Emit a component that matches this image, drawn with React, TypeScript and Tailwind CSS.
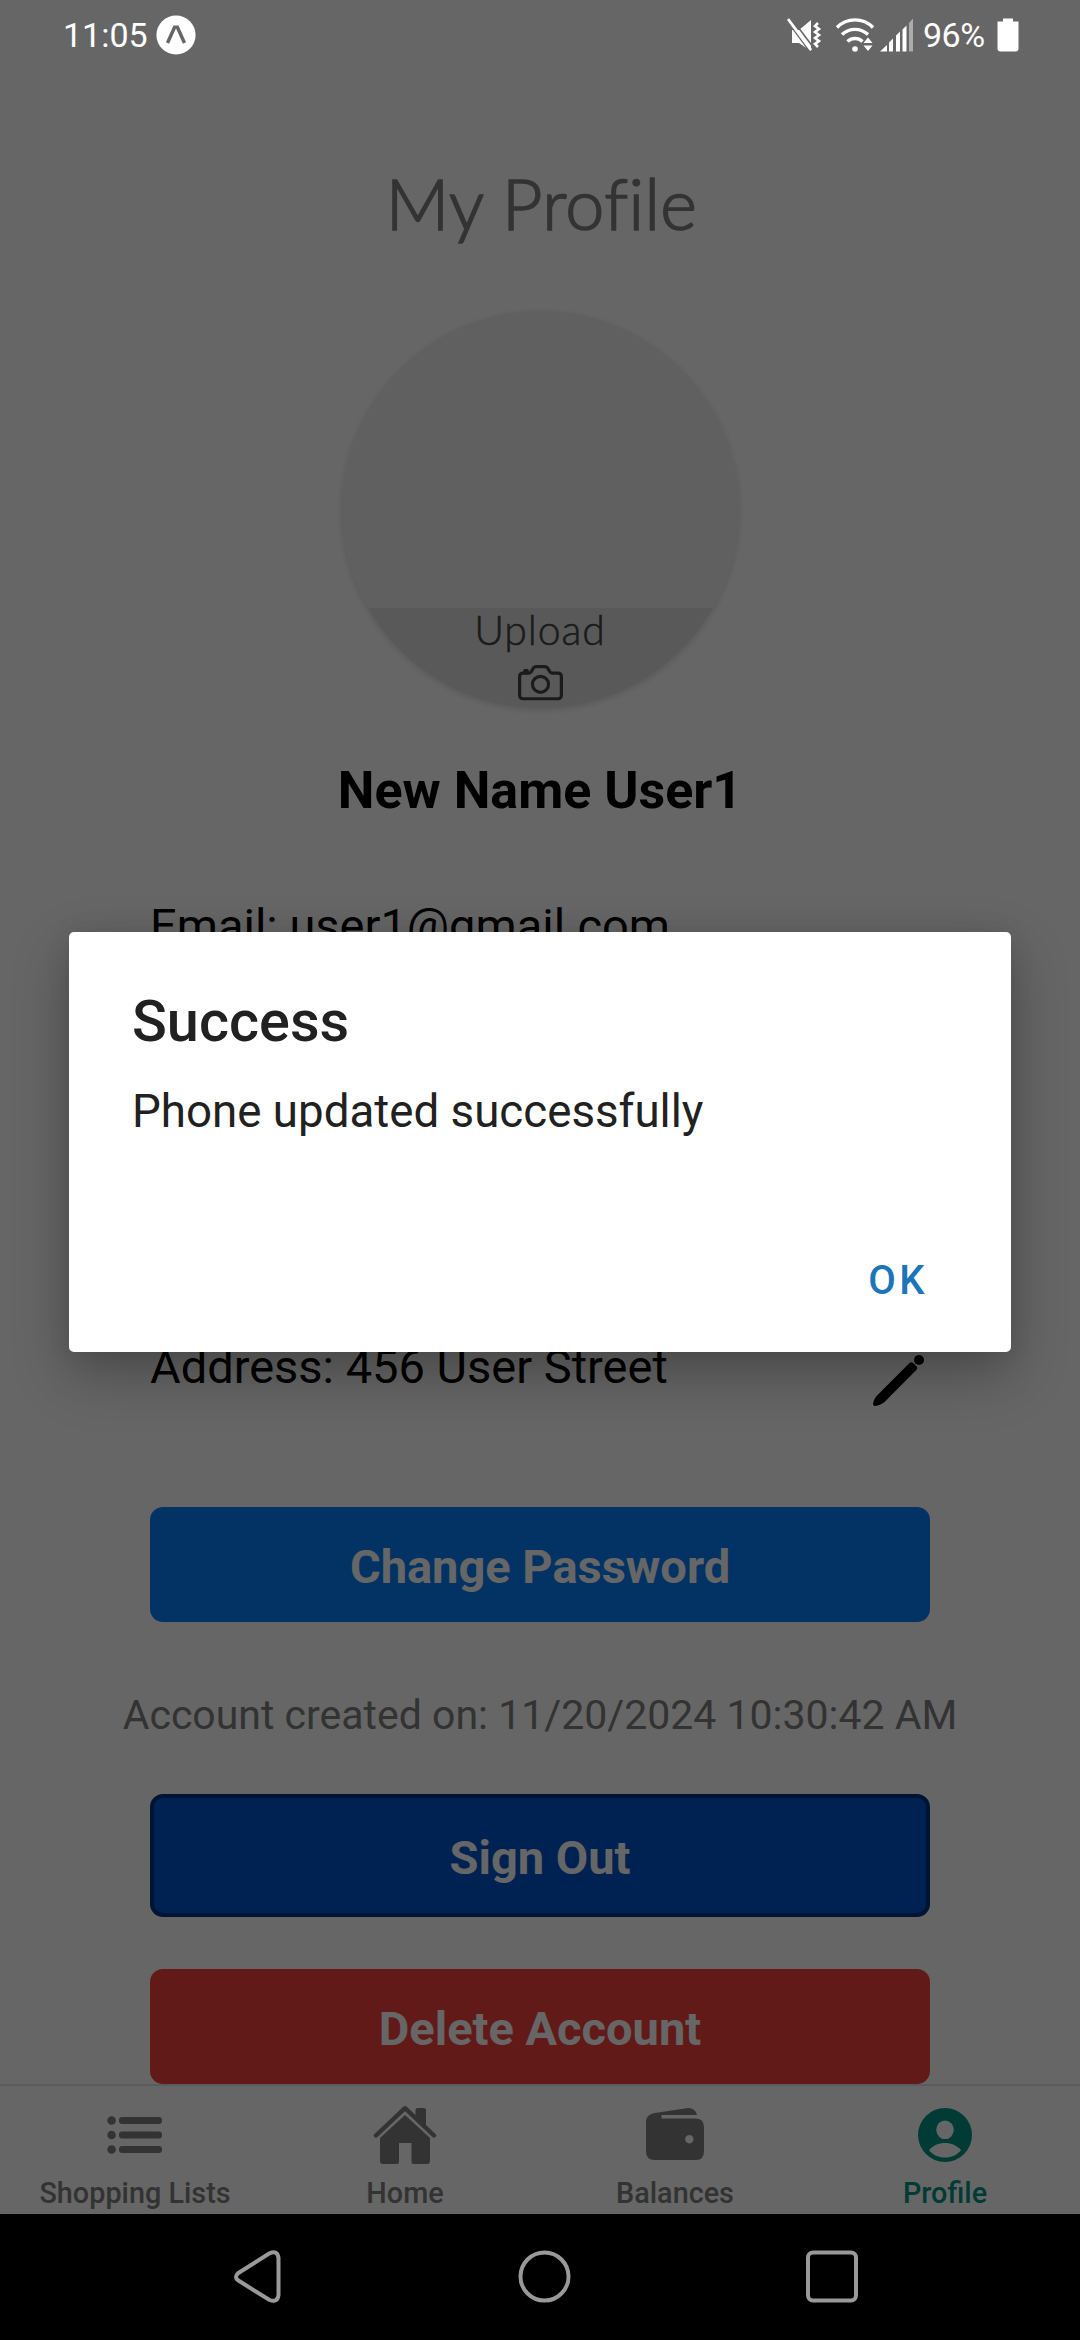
import React from "react";
import { IoCameraOutline } from "react-icons/io5";

function StatusBar() {
  return (
    <div className="absolute inset-x-0 top-0 z-20 flex h-[70px] items-center justify-between pl-[63px] pr-[61px] text-white">
      <div className="flex h-full items-center gap-[8px]">
        <span className="text-[34px] leading-[70px]">11:05</span>
        <svg className="h-[40px] w-[40px]" viewBox="0 0 40 40">
          <circle cx="20" cy="20" r="19.6" fill="#fff" />
          <path d="M11.5 28 18.6 12.3h2.8L28.5 28" fill="none" stroke="#666" strokeWidth="3.4" />
        </svg>
      </div>
      <div className="flex h-full items-center">
        <svg className="h-[34px] w-[35px]" viewBox="0 0 35 34" fill="#fff">
          <path d="M5 12v13h7l12 8V2L12 12Z" />
          <path d="M3.500 -1 27.500 31" stroke="#666" strokeWidth="1.6" />
          <path d="M0 3 24 35" stroke="#666" strokeWidth="1.6" />
          <path d="M1 1 24 32" stroke="#fff" strokeWidth="2.8" />
          <path d="m31 5-3 3 4 3-4 3 4 3-4 3 4 3-4 3 3 3" fill="none" stroke="#fff" strokeWidth="2.6" />
        </svg>
        <svg className="ml-[14px] h-[34px] w-[38px]" viewBox="0 0 38 34" fill="none" stroke="#fff" strokeWidth="3.4">
          <path d="M1 9.5a25 25 0 0 1 36 0" />
          <path d="M6 16.5a19 19 0 0 1 26 0" />
          <path d="M11.5 23.5a11 11 0 0 1 15 0" />
          <circle cx="19" cy="31" r="2.8" fill="#fff" stroke="none" />
          <path d="m27.500 25 4.500-5.500 4.500 5.500ZM27.500 27.500l4.500 5.500 4.500-5.500Z" fill="#fff" stroke="none" />
        </svg>
        <svg className="ml-[6px] h-[34px] w-[34px]" viewBox="0 0 34 34" fill="#fff">
          <path d="M0 33.500 7 27v6.500ZM9 24.500l4-4v13H9ZM16 17.500l4-4v20h-4ZM22.500 11.500l4-4v26h-4Z" />
          <path d="m29 5 4-4.500v33h-4Z" fillOpacity=".45" />
        </svg>
        <span className="ml-[9px] w-[62px] text-[34px] leading-[70px] tracking-[-0.5px]">96%</span>
        <svg className="ml-[12px] h-[34px] w-[22px]" viewBox="0 0 22 34">
          <path d="M6 0.500h10v3h5.500v27q0 3-3 3h-15q-3 0-3-3v-27H6Z" fill="#fff" />
        </svg>
      </div>
    </div>
  );
}

function PencilIcon() {
  return (
    <svg className="h-[51px] w-[51px]" viewBox="0 0 51 51" fill="#000">
      <circle cx="46" cy="5" r="5" />
      <path d="M36.300 8.200q1.700-1.600 3.600-.5l4 4q.9 1.700-.6 3.400L11 47.400Q6.500 50.800 2 51q-2.300-.3-1.900-2.700Q.7 44.500 3.500 41Z" />
    </svg>
  );
}

function ListIcon() {
  return (
    <svg className="h-[60px] w-[64px]" viewBox="0 0 64 60" fill="currentColor">
      {[15.5, 30, 44.5].map((y) => (
        <g key={y}>
          <circle cx="8.600" cy={y} r="4.300" />
          <rect x="16" y={y - 3.4} width="43" height="6.800" rx="3" />
        </g>
      ))}
    </svg>
  );
}

function HomeIcon() {
  return (
    <svg className="h-[60px] w-[64px]" viewBox="0 0 64 60" fill="currentColor">
      <path d="M3 30.500 32 3.200l29 27.300" fill="none" stroke="currentColor" strokeWidth="4.400" strokeLinecap="round" strokeLinejoin="round" />
      <path d="M42.500 11V5q0-2 2-2h6.500q2 0 2 2v17Z" />
      <path d="M32 10 57 33v23q0 3-3 3H40.500q-2 0-2-2V38H26v19q0 2-2 2H10q-3 0-3-3V33Z" />
    </svg>
  );
}

function WalletIcon() {
  return (
    <svg className="h-[60px] w-[64px]" viewBox="0 0 64 60">
      <path
        fill="currentColor"
        fillRule="evenodd"
        d="M3 17q0-7 7.500-8.700L45 3.100q7-.3 9 6.900H18.500v3.500H53q8 .3 8 8.500v24q0 9-8 9H11.500Q3 55 3 46ZM46.300 30a4.200 4.200 0 1 0 .1 0Z"
      />
    </svg>
  );
}

function ProfileIcon() {
  return (
    <svg className="h-[60px] w-[64px]" viewBox="0 0 64 60">
      <circle cx="32" cy="30" r="27" fill="currentColor" />
      <ellipse cx="32" cy="24.800" rx="8.800" ry="9.300" fill="#fff" />
      <path d="M16 45.300C19.500 40.500 26 38 32 38s12.500 2.500 16 7.300C44 50 38.500 52.600 32 52.600S20 50 16 45.300Z" fill="#fff" />
    </svg>
  );
}

const tabs = [
  { label: "Shopping Lists", Icon: ListIcon, active: false },
  { label: "Home", Icon: HomeIcon, active: false },
  { label: "Balances", Icon: WalletIcon, active: false },
  { label: "Profile", Icon: ProfileIcon, active: true },
];

export default function App() {
  return (
    <div className="relative flex h-[2340px] w-[1080px] flex-col overflow-hidden bg-white font-[Roboto,sans-serif]">
      <StatusBar />

      <main className="flex h-[2084px] flex-col items-center overflow-hidden pt-[166px]">
        <h1 className="h-[72px] whitespace-nowrap pl-[3px] font-[Lato,sans-serif] text-[70px] font-light leading-[74px] tracking-[0.4px] text-[#808080] [-webkit-text-stroke:1.7px_#808080]">
          My Profile
        </h1>
        <div className="mt-[73px] flex h-[397px] w-[397px] shrink-0 flex-col justify-end overflow-hidden rounded-full bg-[#f0f0f0] shadow-[0_2px_6px_rgba(0,0,0,0.14)]">
          <div className="flex h-[100px] flex-col items-center bg-[#dedede] text-[#444]">
            <span className="h-[46px] font-[Lato,sans-serif] text-[41px] font-light leading-[44px] tracking-[0.9px] [-webkit-text-stroke:0.5px_#444]">
              Upload
            </span>
            <IoCameraOutline className="mt-[4px] h-[53px] w-[53px]" />
          </div>
        </div>
        <h2 className="mt-[53px] h-[60px] whitespace-nowrap text-[52px] font-bold leading-[60px] text-black">
          New Name User1
        </h2>
        <div className="mt-[75px] flex w-[780px] flex-col text-[47px] leading-[60px] text-black">
          <span className="h-[60px]">Email: user1@gmail.com</span>
          <div className="mt-[381px] flex h-[69px] justify-between pr-[6px]">
            <span>Address: 456 User Street</span>
            <span className="self-end">
              <PencilIcon />
            </span>
          </div>
        </div>
        <button className="mt-[101px] h-[115px] w-[780px] shrink-0 rounded-[13px] bg-[#057ffa] pt-[5px] text-[47px] font-bold text-white">
          Change Password
        </button>
        <p className="mt-[68px] h-[50px] whitespace-nowrap text-[41px] leading-[50px] text-[#808080]">
          Account created on: 11/20/2024 10:30:42 AM
        </p>
        <button className="mt-[54px] h-[123px] w-[780px] shrink-0 rounded-[13px] border-4 border-[#003580] bg-[#0056cc] pt-[5px] text-[47px] font-bold text-white">
          Sign Out
        </button>
        <button className="mt-[52px] h-[115px] w-[780px] shrink-0 rounded-[13px] bg-[#f3433c] pt-[5px] text-[47px] font-bold text-white">
          Delete Account
        </button>
      </main>

      <nav className="flex h-[130px] border-t-2 border-[#e4e4e4] bg-white">
        {tabs.map(({ label, Icon, active }) => (
          <div
            key={label}
            className={
              active
                ? "flex flex-1 flex-col items-center pt-[19px] text-[#009484]"
                : "flex flex-1 flex-col items-center pt-[19px] text-[#808080]"
            }
          >
            <Icon />
            <span className="mt-[12px] whitespace-nowrap text-[28.800px] font-medium leading-[32px]">{label}</span>
          </div>
        ))}
      </nav>

      <footer className="relative z-20 flex h-[126px] items-center bg-black pl-[234px]">
        <svg className="h-[54px] w-[47px]" viewBox="0 0 47 54" fill="none" stroke="#999" strokeWidth="4">
          <path d="M4 23.200 35.500 3.300Q43.500 0 44.500 8v37q-1 8-9 5L4 30.300q-4-3.300 0-7.100Z" />
        </svg>
        <svg className="ml-[236px] h-[54px] w-[54px]" viewBox="0 0 54 54" fill="none" stroke="#999" strokeWidth="4">
          <circle cx="27.500" cy="26.500" r="24" />
        </svg>
        <svg className="ml-[234px] h-[54px] w-[54px]" viewBox="0 0 54 54" fill="none" stroke="#999" strokeWidth="4">
          <rect x="3" y="2.500" width="48" height="48" rx="5" />
        </svg>
      </footer>

      <div className="absolute inset-0 z-10 bg-black/60">
        <div
          role="dialog"
          className="absolute left-[69px] top-[932px] flex h-[420px] w-[942px] flex-col rounded-[5px] bg-white px-[63px] text-[#212121] shadow-[0_22px_56px_rgba(0,0,0,0.28),0_0_24px_rgba(0,0,0,0.08)]"
        >
          <h3 className="mt-[54px] h-[72px] text-[57.600px] font-medium leading-[72px]">Success</h3>
          <p className="mt-[24px] h-[60px] text-[45.700px] leading-[60px]">Phone updated successfully</p>
          <button className="mr-[20px] mt-[108px] h-[60px] self-end text-[40px] font-medium leading-[61px] tracking-[3.5px] text-[#1c75b9]">
            OK
          </button>
        </div>
      </div>
    </div>
  );
}
